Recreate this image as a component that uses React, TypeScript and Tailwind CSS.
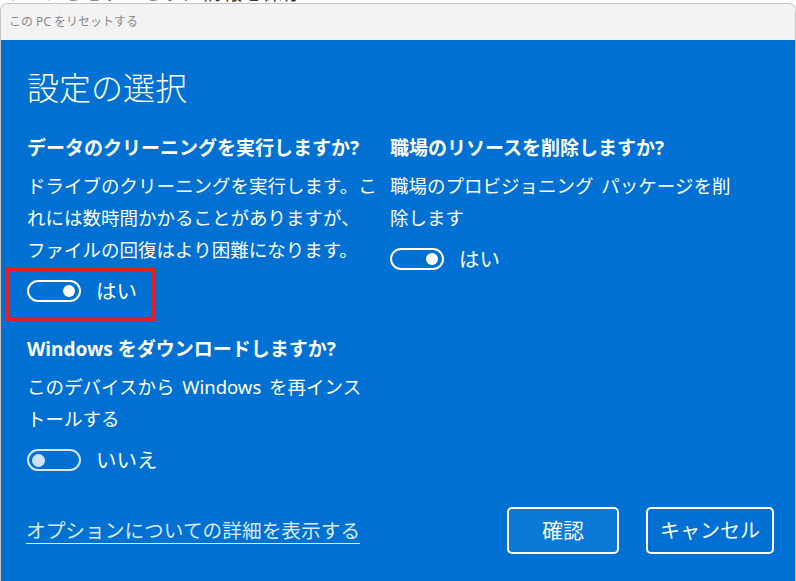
import type { ReactNode } from "react"

const SECTIONS = [
  {
    title: "データのクリーニングを実行しますか?",
    lines: ["ドライブのクリーニングを実行します。こ", "れには数時間かかることがありますが、", "ファイルの回復はより困難になります。"],
    on: true,
    marked: true,
  },
  {
    title: "職場のリソースを削除しますか?",
    lines: ["職場のプロビジョニング パッケージを削", "除します"],
    on: true,
    marked: false,
  },
  {
    title: "Windows をダウンロードしますか?",
    lines: ["このデバイスから Windows を再インス", "トールする"],
    on: false,
    marked: false,
  },
]

function Toggle({ on }: { on: boolean }) {
  return on ? (
    <div className="w-[54px] h-[22px] rounded-full border-2 border-white flex items-center justify-end pr-[4px] shrink-0">
      <span className="size-[12px] rounded-full bg-white" />
    </div>
  ) : (
    <div className="w-[54px] h-[22px] rounded-full border-2 border-[#d8e7f8] flex items-center justify-start pl-[3px] shrink-0">
      <span className="size-[13px] rounded-full bg-[#cfe2f7]" />
    </div>
  )
}

function Section({ title, lines, on, marked }: { title: string; lines: string[]; on: boolean; marked: boolean }) {
  const body: ReactNode[] = []
  lines.forEach((l, i) => {
    if (i > 0) body.push(<br key={"b" + i} />)
    body.push(<span key={i}>{l}</span>)
  })
  return (
    <div className="flex flex-col">
      <h3 className="font-bold text-[19px] leading-[32px] whitespace-nowrap">{title}</h3>
      <p className="mt-[6px] text-[18.5px] leading-[32px] whitespace-nowrap [word-spacing:3px]">{body}</p>
      <div className="relative mt-[9px] h-[32px] flex items-center gap-[15px]">
        <Toggle on={on} />
        <span className="text-[20.5px]">{on ? "はい" : "いいえ"}</span>
        {/* red annotation box from the screenshot */}
        {marked && (
          <span className="absolute left-[-21px] top-[-8px] w-[150px] h-[54px] border-[4px] border-[#e41f26]" />
        )}
      </div>
    </div>
  )
}

export default function App() {
  const [first, second, third] = SECTIONS
  return (
    <div className="w-[796px] h-[581px] overflow-hidden bg-white flex flex-col font-['Noto_Sans','Noto_Sans_CJK_JP',sans-serif]">
      {/* clipped window behind */}
      <div className="h-[3px] overflow-hidden pl-[2px]">
        <div className="-mt-[17px] text-[20px] leading-[20px] text-[#333] whitespace-nowrap">イ　ドとセットとうに情報を保存</div>
      </div>

      <div className="flex-1 flex flex-col rounded-t-[8px] border-t border-x border-[#c4c4c4] overflow-hidden">
        <div className="h-[36px] bg-[#f3f3f3] flex items-center pl-[8px] text-[12px] text-[#8a8a8a]">
          この PC をリセットする
        </div>

        <div className="flex-1 flex flex-col bg-[#0070d3] text-white pl-[26px] pr-[21px] pt-[28px]">
          <h1 className="text-[32px] leading-[40px] font-light">設定の選択</h1>

          <div className="mt-[24px] grid grid-cols-[363px_1fr] gap-y-[26px]">
            <Section {...first} />
            <Section {...second} />
            <Section {...third} />
          </div>

          <div className="mt-auto pb-[27px] flex items-center justify-between">
            <span className="-ml-[1px] text-[19.7px] text-[#dbeafa] underline underline-offset-[5px] decoration-1">
              オプションについての詳細を表示する
            </span>
            <div className="flex gap-[27px]">
              <button className="w-[112px] h-[47px] rounded-[5px] border-2 border-white bg-[#0a79d8] text-[21px]">
                確認
              </button>
              <button className="w-[128px] h-[47px] rounded-[5px] border-2 border-white text-[20px]">
                キャンセル
              </button>
            </div>
          </div>
        </div>
      </div>
    </div>
  )
}
